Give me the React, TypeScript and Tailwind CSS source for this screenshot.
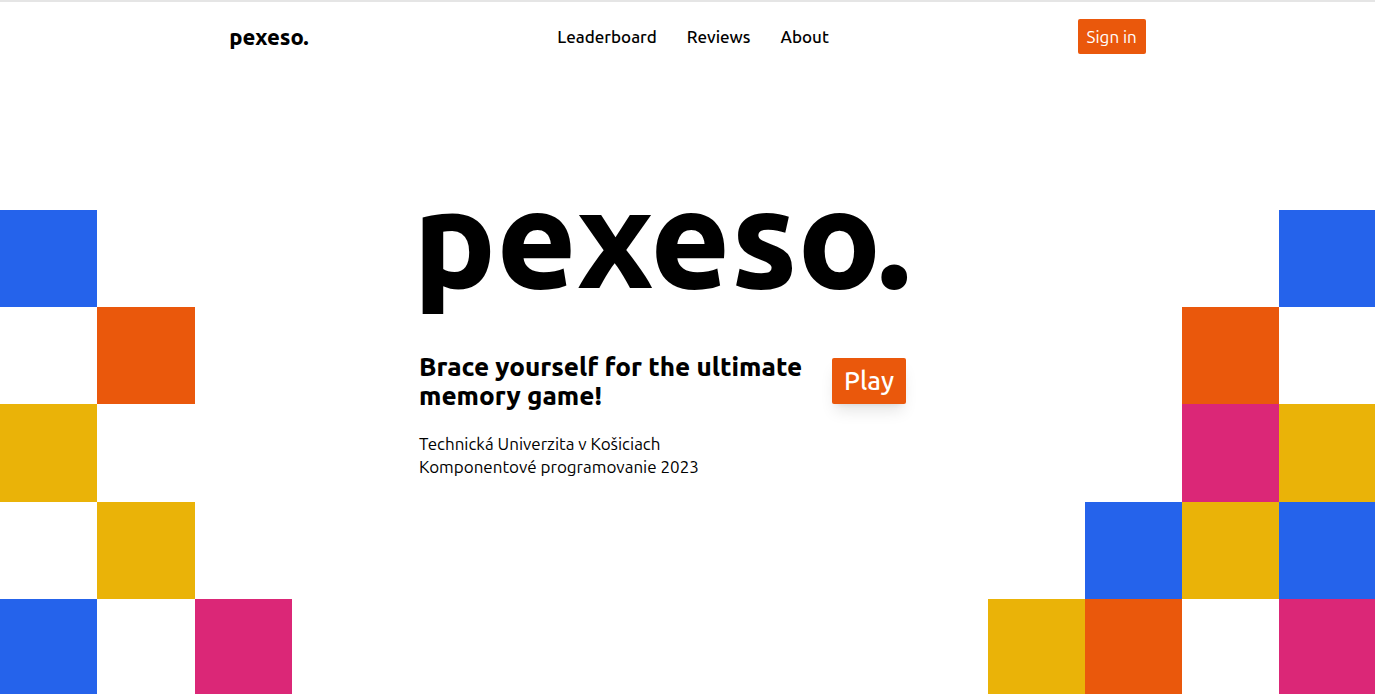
const colors = {
  b: "bg-[#2563eb]",
  o: "bg-[#ea580c]",
  y: "bg-[#eab308]",
  p: "bg-[#db2777]",
  "-": "bg-transparent",
};

type Tile = keyof typeof colors;

const leftTiles = ["b--", "-o-", "y--", "-y-", "b-p"];
const rightTiles = ["---b", "--o-", "--py", "-byb", "yo-p"];

function Mosaic({ rows, className }: { rows: string[]; className: string }) {
  return (
    <div aria-hidden="true" className={`grid h-[486px] shrink-0 grid-rows-5 ${className}`}>
      {rows.flatMap((row, r) =>
        row.split("").map((tile, c) => <div key={`${r}-${c}`} className={colors[tile as Tile]} />),
      )}
    </div>
  );
}

export default function App() {
  return (
    <div className="flex min-h-screen flex-col overflow-hidden border-t-2 border-[#e5e5e5] bg-white font-['Ubuntu','Noto_Sans',sans-serif] text-black">
      <header className="mx-auto flex w-2/3 items-center justify-between pt-[17px]">
        <a href="#home" className="text-[22px] leading-6 font-extrabold">
          pexeso.
        </a>
        <nav className="flex gap-[30px] text-[17px] leading-6 font-medium">
          <a href="#leaderboard">Leaderboard</a>
          <a href="#reviews">Reviews</a>
          <a href="#about">About</a>
        </nav>
        <button type="button" className="rounded-xs bg-[#ea580c] px-[9px] py-[5px] text-[17px] leading-[25px] whitespace-nowrap text-white">
          Sign in
        </button>
      </header>

      <main className="grid h-0 grow grid-cols-[1fr_537px_1fr] items-start pt-[100px]">
        <div className="mt-14 flex justify-start">
          <Mosaic rows={leftTiles} className="w-[292px] grid-cols-3" />
        </div>
        <section>
          <h1 className="mt-1 -ml-1.5 text-[138px] leading-[158px] font-extrabold">pexeso.</h1>
          <div className="mt-9 flex w-[487px] items-start justify-between">
            <h2 className="text-[26px] leading-[29px] font-extrabold">
              Brace yourself for the ultimate
              <br />
              memory game!
            </h2>
            <button type="button" className="mt-1.5 rounded-xs bg-[#ea580c] px-3 py-2 text-[26px] leading-[30px] font-medium text-white shadow-lg">
              Play
            </button>
          </div>
          <p className="mt-[22px] text-[17px] leading-[23px]">
            Technická Univerzita v Košiciach
            <br />
            Komponentové programovanie 2023
          </p>
        </section>
        <div className="mt-14 flex justify-end">
          <Mosaic rows={rightTiles} className="-mr-px w-[388px] grid-cols-4" />
        </div>
      </main>
    </div>
  );
}
